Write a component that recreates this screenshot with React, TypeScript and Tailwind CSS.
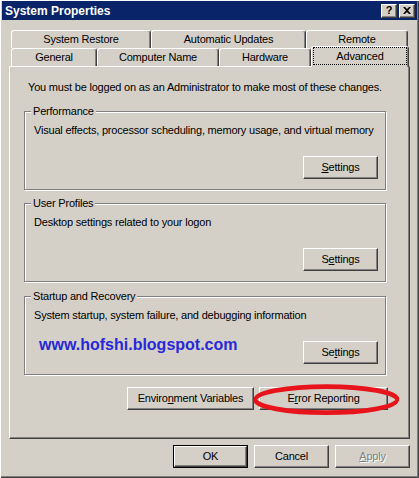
import React from "react";

function Btn({
  children,
  className = "",
  disabled = false,
}: {
  children: React.ReactNode;
  className?: string;
  disabled?: boolean;
}) {
  return (
    <div
      className={
        "h-[23px] flex items-center justify-center bg-[#d4d0c8] border border-t-white border-l-white border-r-[#404040] border-b-[#404040] shadow-[inset_-1px_-1px_0_#808080] leading-[13px] " +
        (disabled ? "text-[#808080] [text-shadow:1px_1px_0_#fff] " : "") +
        className
      }
    >
      {children}
    </div>
  );
}

function Group({
  title,
  desc,
  children,
  className = "",
}: {
  title: string;
  desc: string;
  children: React.ReactNode;
  className?: string;
}) {
  return (
    <div
      className={
        "relative w-[362px] h-[79px] border border-[#808080] shadow-[1px_1px_0_#fff,inset_1px_1px_0_#fff] pt-[12px] pl-[9px] pr-[7px] flex flex-col " +
        className
      }
    >
      <span className="absolute left-[6px] -top-[7px] bg-[#d4d0c8] px-[2px] leading-[13px]">
        {title}
      </span>
      <div className="leading-[13px] whitespace-nowrap">{desc}</div>
      {children}
    </div>
  );
}

function Tab({
  children,
  className = "",
}: {
  children: React.ReactNode;
  className?: string;
}) {
  return (
    <div
      className={
        "h-[18px] flex items-center justify-center border-t border-l border-r border-t-white border-l-white border-r-[#404040] shadow-[inset_-1px_0_0_#808080] rounded-t-[3px] leading-[13px] " +
        className
      }
    >
      {children}
    </div>
  );
}

export default function App() {
  return (
    <div className="w-[419px] h-[478px] bg-[#d4d0c8] relative overflow-hidden font-['Liberation_Sans',Arial,sans-serif] text-[11px] tracking-[-0.2px] text-black shadow-[inset_1px_1px_0_#fff,inset_-1px_-1px_0_#404040,inset_-2px_-2px_0_#808080] pt-[1px] px-[2px]">
      {/* Title bar */}
      <div className="h-[19px] bg-[#0a246a] flex items-center pl-[3px] pr-[2px]">
        <span className="text-white font-bold text-[12px] leading-none tracking-normal">
          System Properties
        </span>
        <div className="ml-auto flex gap-[2px]">
          <div className="w-[16px] h-[14px] bg-[#d4d0c8] border border-t-white border-l-white border-r-[#404040] border-b-[#404040] shadow-[inset_-1px_-1px_0_#808080] flex items-center justify-center font-bold text-[11px] leading-none">
            ?
          </div>
          <div className="w-[16px] h-[14px] bg-[#d4d0c8] border border-t-white border-l-white border-r-[#404040] border-b-[#404040] shadow-[inset_-1px_-1px_0_#808080] flex items-center justify-center">
            <svg width="8" height="7" viewBox="0 0 8 7">
              <path
                d="M0 0h2l2 2 2-2h2L5 3.5 8 7H6L4 5 2 7H0l3-3.5z"
                fill="#000"
              />
            </svg>
          </div>
        </div>
      </div>

      {/* Tabs + panel */}
      <div className="ml-[7px] mt-[10px] w-[401px]">
        <div className="flex pl-[2px] h-[18px]">
          <Tab className="w-[140px]">System Restore</Tab>
          <Tab className="w-[155px]">Automatic Updates</Tab>
          <Tab className="w-[102px]">Remote</Tab>
        </div>
        <div className="flex pl-[2px] h-[18px] items-end">
          <Tab className="w-[86px]">General</Tab>
          <Tab className="w-[122px]">Computer Name</Tab>
          <Tab className="w-[92px]">Hardware</Tab>
          <div className="relative z-10 w-[98px] h-[21px] -mb-[1px] bg-[#d4d0c8] border-t border-l border-r border-t-white border-l-white border-r-[#404040] shadow-[inset_-1px_0_0_#808080] rounded-t-[3px] pt-0 flex items-start">
            <div className="mx-[1px] flex-1 h-[18px] border border-dotted border-black flex items-center justify-center leading-[13px]">
              Advanced
            </div>
          </div>
        </div>

        <div className="w-[401px] h-[373px] border border-t-white border-l-white border-r-[#404040] border-b-[#404040] shadow-[inset_-1px_-1px_0_#808080] pt-[14px] pl-[14px] flex flex-col">
          <div className="leading-[13px] pl-[4px] whitespace-nowrap">
            You must be logged on as an Administrator to make most of these
            changes.
          </div>

          <Group
            className="mt-[17px]"
            title="Performance"
            desc="Visual effects, processor scheduling, memory usage, and virtual memory"
          >
            <div className="mt-[19px] self-end">
              <Btn className="w-[75px]">
                <span>
                  <u>S</u>ettings
                </span>
              </Btn>
            </div>
          </Group>

          <Group
            className="mt-[13px]"
            title="User Profiles"
            desc="Desktop settings related to your logon"
          >
            <div className="mt-[19px] self-end">
              <Btn className="w-[75px]">
                <span>
                  S<u>e</u>ttings
                </span>
              </Btn>
            </div>
          </Group>

          <Group
            className="mt-[14px]"
            title="Startup and Recovery"
            desc="System startup, system failure, and debugging information"
          >
            <div className="mt-[19px] flex items-start justify-between">
              <span className="-mt-[5px] ml-[5px] leading-[18px] text-[16px] font-bold tracking-normal text-[#2828d8]">
                www.hofshi.blogspot.com
              </span>
              <Btn className="w-[75px]">
                <span>
                  Se<u>t</u>tings
                </span>
              </Btn>
            </div>
          </Group>

          <div className="mt-[12px] ml-[103px] flex gap-[5px]">
            <Btn className="w-[127px]">
              <span>
                Enviro<u>n</u>ment Variables
              </span>
            </Btn>
            <Btn className="w-[129px]">
              <span>
                E<u>r</u>ror Reporting
              </span>
            </Btn>
          </div>
        </div>
      </div>

      {/* Dialog buttons */}
      <div className="mt-[6px] ml-[171px] flex gap-[6px]">
        <div className="w-[75px] h-[23px] border border-black">
          <div className="h-[21px] flex items-center justify-center bg-[#d4d0c8] border border-t-white border-l-white border-r-[#404040] border-b-[#404040] shadow-[inset_-1px_-1px_0_#808080] leading-[13px]">
            OK
          </div>
        </div>
        <Btn className="w-[75px]">Cancel</Btn>
        <Btn className="w-[75px]" disabled>
          <span>
            <u>A</u>pply
          </span>
        </Btn>
      </div>

      {/* Red highlight ellipse */}
      <svg
        className="absolute left-[250px] top-[380px] pointer-events-none"
        width="155"
        height="40"
        viewBox="0 0 155 40"
      >
        <ellipse
          cx="76.5"
          cy="19"
          rx="71"
          ry="13"
          fill="none"
          stroke="#e8141c"
          strokeWidth="3.5"
        />
        <ellipse
          cx="76"
          cy="20.5"
          rx="71"
          ry="13"
          fill="none"
          stroke="#e8141c"
          strokeWidth="3"
        />
      </svg>
    </div>
  );
}
